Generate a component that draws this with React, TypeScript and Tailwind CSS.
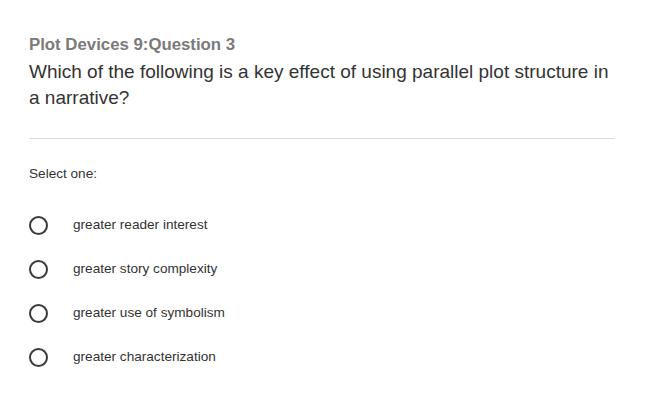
const options = [
    "greater reader interest",
    "greater story complexity",
    "greater use of symbolism",
    "greater characterization",
];

const App = () => {
    return (
        <div className="min-h-[405px] w-[656px] bg-white px-[29px] pt-[35px] font-['Liberation_Sans',Arial,sans-serif]">
            <div className="w-[586px]">
                <h2 className="text-[16.8px] font-bold leading-[20px] text-[#7a7a7a]">
                    Plot Devices 9:Question 3
                </h2>
                <p className="mt-[4px] text-[19px] leading-[26px] text-[#333333]">
                    Which of the following is a key effect of using parallel plot structure in a narrative?
                </p>
                <div className="mt-[27px] h-px w-full bg-[#dddddd]" />
                <p className="mt-[26px] text-[13.6px] leading-[18px] text-[#333333]">Select one:</p>
                <div className="mt-[33px] flex flex-col gap-[26px]">
                    {options.map((opt) => (
                        <label key={opt} className="flex h-[18px] items-center">
                            <span className="h-[19px] w-[19px] rounded-full border-2 border-[#3a3a3a]" />
                            <span className="ml-[25px] text-[13.6px] text-[#333333]">{opt}</span>
                        </label>
                    ))}
                </div>
            </div>
        </div>
    );
};

export default App;
